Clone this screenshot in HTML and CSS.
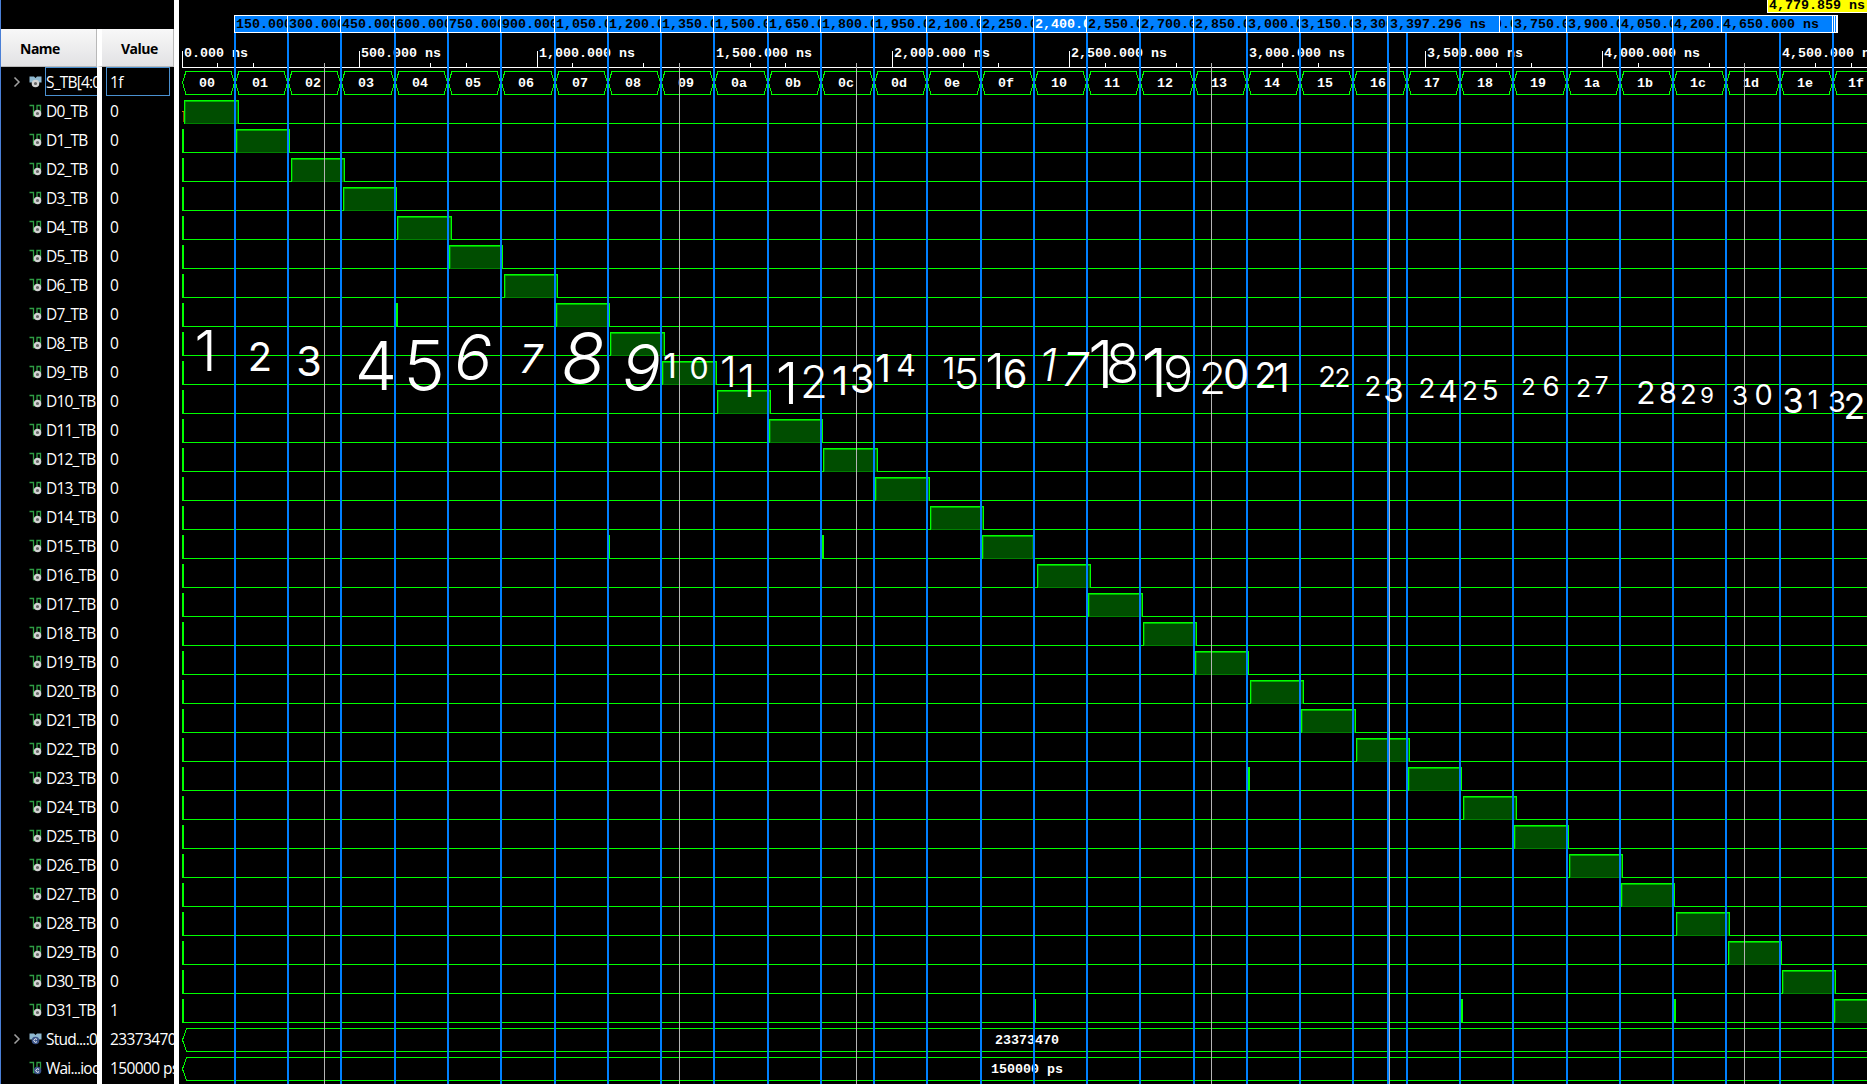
FILE: index.html
```
<!DOCTYPE html>
<html lang="en">
<head>
<meta charset="utf-8">
<title>Waveform viewer</title>
<link rel="stylesheet" href="styles.css">
</head>
<body>
<svg class="symbols" aria-hidden="true">
  <symbol id="icon-bit" viewBox="0 0 14 14">
    <path d="M0.500 1.500H4.500V11.500H8V1.500H11.500V8" fill="none" stroke="#2f9e44" stroke-width="1.300"/>
    <circle cx="8.500" cy="9.500" r="2.700" fill="#666" stroke="#d2d2d2" stroke-width="2.200"/>
  </symbol>
  <symbol id="icon-bus" viewBox="0 0 14 14">
    <path d="M0.500 1.500H5L6.500 3L8 1.500H12.500V7.500H0.500Z" fill="#8fb8cf"/>
    <circle cx="6.500" cy="8.500" r="2.700" fill="#666" stroke="#d2d2d2" stroke-width="2.200"/>
  </symbol>
  <symbol id="icon-bit-const" viewBox="0 0 14 14">
    <path d="M0.500 1.500H4.500V11.500H8V1.500H11.500V8" fill="none" stroke="#2f9e44" stroke-width="1.300"/>
    <circle cx="8.500" cy="9.500" r="3.800" fill="#3b5488"/>
    <path d="M10 8.500A1.700 1.700 0 1 0 10 10.600" fill="none" stroke="#fff" stroke-width="1"/>
  </symbol>
  <symbol id="icon-bus-const" viewBox="0 0 14 14">
    <path d="M0.500 1.500H5L6.500 3L8 1.500H12.500V7.500H0.500Z" fill="#8fb8cf"/>
    <circle cx="6.500" cy="8.500" r="3.800" fill="#3b5488"/>
    <path d="M8 7.500A1.700 1.700 0 1 0 8 9.600" fill="none" stroke="#fff" stroke-width="1"/>
  </symbol>
</svg>
<main class="viewer">
  <section class="column names">
    <h2 class="heading">Name</h2>
    <div class="rows" id="names"></div>
  </section>
  <section class="column values">
    <h2 class="heading">Value</h2>
    <div class="rows" id="values"></div>
  </section>
  <svg class="scope" id="scope" width="1688" height="1084" viewBox="179 0 1688 1084"></svg>
</main>
<script src="wave.js"></script>
</body>
</html>
```
FILE: styles.css
```
body {
  margin: 0;
  background: #000;
  color: #fff;
  font-family: "Open Sans", "Noto Sans", sans-serif;
}
.symbols {
  display: block;
  width: 0;
  height: 0;
}
.viewer {
  display: flex;
  width: 1867px;
  height: 1084px;
  overflow: hidden;
}
.column {
  box-sizing: border-box;
  flex: none;
  padding-top: 29px;
  overflow: hidden;
}
.names {
  width: 97px;
  border-left: 1px solid #4a7fd6;
}
.values {
  width: 82px;
  border-right: 5px solid #fff;
}
.values .heading,
.values .rows {
  border-left: 5px solid #fff;
}
.heading {
  box-sizing: border-box;
  height: 38px;
  margin: 0;
  border-right: 1px solid #b8b8b8;
  border-bottom: 1px solid #b8b8b8;
  background: linear-gradient(#f8f8f8, #e2e2e4);
  color: #000;
  font-size: 14px;
  font-weight: 700;
  line-height: 40px;
  letter-spacing: -0.5px;
  padding-left: 19px;
}
.rows {
  height: 1017px;
}
.row {
  display: flex;
  align-items: center;
  height: 29px;
  font-size: 15.5px;
  line-height: 28px;
  letter-spacing: -0.8px;
  white-space: nowrap;
}
.values .row {
  letter-spacing: -0.6px;
}
.arrow {
  flex: none;
  width: 8px;
  height: 10px;
  margin: 0 8px 0 12px;
}
.icon {
  flex: none;
  width: 14px;
  height: 14px;
}
.name {
  box-sizing: border-box;
  flex: 1 0 auto;
  height: 29px;
  margin-left: 2px;
  border: 1px solid transparent;
}
.value {
  box-sizing: border-box;
  width: 64px;
  height: 29px;
  margin-left: 4px;
  padding-left: 3px;
  border: 1px solid transparent;
}
.selected {
  border-color: #4a90d0;
}
.scope {
  display: block;
  flex: none;
  shape-rendering: crispEdges;
}
.mono {
  font: bold 13.33px "Liberation Mono", monospace;
  fill: #fff;
  white-space: pre;
}
.mono-dark {
  fill: #000;
}
.ink {
  font-family: Inter, sans-serif;
  font-weight: 400;
  fill: #fff;
  text-anchor: middle;
}
.ink-large {
  font-weight: 300;
}
.slanted {
  font-style: italic;
}
```
FILE: wave.js
```
const ORIGIN = 182.15;
const SCALE = 0.3551;
const RIGHT = 1867;
const ROW = 29;
const xAt = (t) => Math.floor(ORIGIN + t * SCALE);

// First and last pixel column of each output's high phase.
const PULSES = [
  [184, 238], [236, 289], [291, 344], [343, 396], [397, 451], [449, 502], [504, 557], [556, 609],
  [610, 664], [662, 716], [717, 770], [769, 822], [823, 877], [875, 929], [930, 983], [982, 1033],
  [1037, 1090], [1088, 1142], [1143, 1196], [1195, 1248], [1250, 1303], [1301, 1355], [1356, 1409],
  [1408, 1461], [1463, 1516], [1514, 1568], [1569, 1622], [1621, 1674], [1676, 1729], [1728, 1781],
  [1782, 1835], [1834, 1890]
];
const GLITCHES = { 7: [396], 15: [608, 822], 23: [1248], 31: [1034, 1461, 1674] };

// Signal list
const signals = [{ name: "S_TB[4:0]", value: "1f", icon: "bus", open: true, selected: true }];
for (let i = 0; i < 32; i++) {
  signals.push({ name: `D${i}_TB`, value: i === 31 ? "1" : "0", icon: "bit" });
}
signals.push({ name: "Stud...:0]", value: "23373470", icon: "bus-const", open: true });
signals.push({ name: "Wai...iod", value: "150000 ps", icon: "bit-const" });

document.getElementById("names").innerHTML = signals.map((s) => `
  <div class="row">
    <svg class="arrow" viewBox="0 0 8 10">${s.open ? '<path d="M1.500 0.500L6 5L1.500 9.500" fill="none" stroke="#a0a0a0" stroke-width="1.500"/>' : ""}</svg>
    <svg class="icon"><use href="#icon-${s.icon}"/></svg>
    <div class="name${s.selected ? " selected" : ""}">${s.name}</div>
  </div>`).join("");
document.getElementById("values").innerHTML = signals.map((s) =>
  `<div class="row"><div class="value${s.selected ? " selected" : ""}">${s.value}</div></div>`).join("");

const out = [];
const rect = (x, y, w, h, fill) => out.push(`<rect x="${x}" y="${y}" width="${w}" height="${h}" fill="${fill}"/>`);
const label = (x, y, s, cls = "") =>
  out.push(`<text class="mono ${cls}" x="${x}" y="${y}" textLength="${s.length * 8}">${s}</text>`);
const time = (t) => t.toLocaleString("en-US", { minimumFractionDigits: 3 }) + " ns";

// Ruler
rect(182, 67, RIGHT - 182, 1, "#fff");
for (let t = 0; t <= 4700; t += 100) {
  if (t % 500 === 0) {
    rect(xAt(t), 51, 1, 17, "#fff");
    label(xAt(t) + 2, 57, time(t));
  } else {
    rect(xAt(t), 63, 1, 5, "#fff");
  }
}

// Select bus
const bus = (d) => out.push(`<path d="${d}" fill="none" stroke="#0f0" stroke-width="1"/>`);
for (let i = 0; i < 32; i++) {
  const a = xAt(i * 150) + 0.5;
  const b = xAt((i + 1) * 150) - 0.5;
  bus(`M${a} 82.500L${a + 3.500} 71.500H${b - 3.500}L${b} 82.500L${b - 3.500} 94.500H${a + 3.500}Z`);
  label(i === 31 ? 1848 : Math.floor((a + b) / 2 - 9.5), 87, i.toString(16).padStart(2, "0"));
}

// Decoder outputs
PULSES.forEach(([a, b], i) => {
  const top = 100 + i * ROW;
  const base = top + 23;
  if (i === 0) {
    rect(182, 111, 2, 1, "#c87800");
    rect(183, 112, 1, 10, "#8a4a00");
  } else {
    rect(182, top, 2, 23, "#0f0");
    rect(182, base, a - 182, 1, "#0f0");
  }
  rect(a, top, b - a + 1, 24, "#0f0");
  rect(a + 1, top + 1, b - a - 1, 23, "#008000");
  rect(a + 1, top + 1, b - a - 1, 1, "#00b400");
  rect(a + 2, top + 2, b - a - 3, 21, "#004d00");
  rect(b, base, Math.max(0, RIGHT - b), 1, "#0f0");
  (GLITCHES[i] || []).forEach((x) => rect(x, top, 2, 24, "#0f0"));
});

// Constant buses
[[1028, "23373470", 995], [1057, "150000 ps", 991]].forEach(([y, s, x]) => {
  bus(`M1870 ${y + 0.5}H186.500L182.500 ${y + 12}L186.500 ${y + 23.5}H1870`);
  label(x, y + 16, s);
});

// Grid lines
for (const t of [400, 1400, 1900, 2900, 3400, 4400]) rect(xAt(t), 63, 1, 1021, "#b4b4b4");

// Markers
const marks = [];
for (let t = 150; t <= 4650; t += 150) marks.push(t);
for (const t of marks.concat(3397.296)) rect(xAt(t) - 1, 33, 2, 1051, "#0080ff");

rect(234, 15, 1604, 18, "#fff");
const flags = [];
for (let t = 150; t <= 3300; t += 150) flags.push([xAt(t) - 1, t === 3300 ? 1387 : xAt(t + 150) - 1, xAt(t) + 1, t]);
flags.push([1387, 1499, 1390, 3397.296], [1499, 1512, 1462, 3600]);
for (let t = 3750; t <= 4200; t += 150) flags.push([xAt(t) - 1, t === 4200 ? 1721 : xAt(t + 150) - 1, xAt(t) + 1, t]);
flags.push([1721, 1832, 1723, 4650]);
flags.forEach(([a, b, x, t], i) => {
  rect(a + 1, 16, b - a - 1, 16, "#0080ff");
  out.push(`<clipPath id="flag${i}"><rect x="${a + 1}" y="15" width="${b - a - 1}" height="18"/></clipPath><g clip-path="url(#flag${i})">`);
  label(x, 28, time(t), t === 2400 ? "" : "mono-dark");
  out.push("</g>");
});
rect(1833, 16, 1, 16, "#0080ff");
rect(1835, 16, 1, 16, "#0080ff");

rect(1767, 0, 100, 13, "#fff");
rect(1768, 0, 99, 12, "#ff0");
label(1769, 9, "4,779.859 ns", "mono-dark");

// Hand-numbered steps: [digit, left, right, top, bottom]
const INK = [
  [["1", 203, 208, 330, 371]], [["2", 251, 269, 342, 371]], [["3", 301, 317, 346, 376]],
  [["4", 365, 387, 341, 390]], [["5", 412, 436, 340, 391]], [["6", 457, 489, 334, 380]],
  [["7", 521, 541, 344, 373]], [["8", 566, 600, 332, 384]], [["9", 630, 653, 344, 391]],
  [["1", 668, 672, 353, 378], ["0", 690, 708, 357, 379]],
  [["1", 727, 730, 356, 387], ["1", 745, 748, 364, 397]],
  [["1", 786, 788, 362, 404], ["2", 801, 827, 365, 398]],
  [["1", 838, 842, 366, 395], ["3", 856, 868, 364, 393]],
  [["1", 880, 886, 354, 382], ["4", 896, 916, 354, 376]],
  [["1", 947, 951, 357, 379], ["5", 956, 977, 358, 389]],
  [["1", 993, 997, 353, 389], ["6", 1006, 1024, 359, 388]],
  [["1", 1045, 1051, 348, 381], ["7", 1059, 1091, 352, 386]],
  [["1", 1099, 1103, 340, 388], ["8", 1110, 1135, 343, 383]],
  [["1", 1153, 1156, 348, 397], ["9", 1169, 1187, 355, 392]],
  [["2", 1205, 1220, 362, 394], ["0", 1229, 1243, 359, 389]],
  [["2", 1257, 1274, 362, 388], ["1", 1280, 1283, 363, 392]],
  [["2", 1319, 1335, 366, 387], ["2", 1335, 1350, 368, 387]],
  [["2", 1364, 1382, 376, 396], ["3", 1385, 1402, 378, 402]],
  [["2", 1417, 1437, 378, 398], ["4", 1441, 1455, 380, 402]],
  [["2", 1462, 1478, 381, 400], ["5", 1481, 1499, 380, 400]],
  [["2", 1516, 1541, 378, 395], ["6", 1546, 1556, 376, 396]],
  [["2", 1573, 1594, 379, 397], ["7", 1595, 1608, 376, 394]],
  [["2", 1636, 1656, 381, 404], ["8", 1661, 1675, 382, 403]],
  [["2", 1680, 1697, 384, 404], ["9", 1701, 1713, 387, 403]],
  [["3", 1735, 1745, 386, 405], ["0", 1754, 1773, 384, 405]],
  [["3", 1787, 1799, 388, 413], ["1", 1810, 1816, 390, 409]],
  [["3", 1832, 1842, 391, 412], ["2", 1845, 1864, 393, 419]]
];
const SLANTED = [6, 7, 8, 9, 17];
INK.forEach((digits, i) => {
  const spans = digits.map(([d, l, r, t, b]) => {
    const size = (b - t) / 0.727;
    return `<tspan class="${size > 42 ? "ink-large" : ""}" x="${(l + r) / 2}" y="${b}" font-size="${size.toFixed(1)}">${d}</tspan>`;
  }).join("");
  out.push(`<text class="ink${SLANTED.includes(i + 1) ? " slanted" : ""}">${spans}</text>`);
});

document.getElementById("scope").innerHTML = out.join("");
```
